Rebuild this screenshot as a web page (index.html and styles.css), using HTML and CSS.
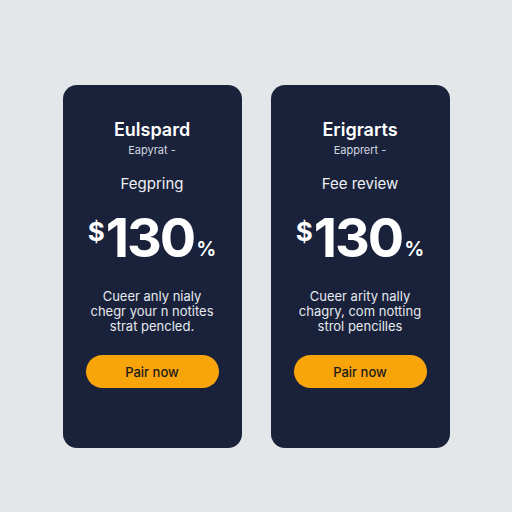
FILE: index.html
```html
<!DOCTYPE html>
<html lang="en">
<head>
    <meta charset="UTF-8">
    <meta name="viewport" content="width=device-width, initial-scale=1.0">
    <title>Plans</title>
    <link rel="stylesheet" href="styles.css">
</head>
<body>
    <div class="plans">
        <div class="plan-card">
            <h2 class="plan-name">Eulspard</h2>
            <div class="plan-sub">Eapyrat -</div>
            <div class="plan-label">Fegpring</div>
            <div class="price">
                <span class="currency">$</span><span class="amount">130</span><span class="unit">%</span>
            </div>
            <p class="plan-desc">Cueer anly nialy<br>chegr your n notites<br>strat pencled.</p>
            <button class="plan-btn">Pair now</button>
        </div>

        <div class="plan-card">
            <h2 class="plan-name">Erigrarts</h2>
            <div class="plan-sub">Eapprert -</div>
            <div class="plan-label">Fee review</div>
            <div class="price">
                <span class="currency">$</span><span class="amount">130</span><span class="unit">%</span>
            </div>
            <p class="plan-desc">Cueer arity nally<br>chagry, com notting<br>strol pencilles</p>
            <button class="plan-btn">Pair now</button>
        </div>
    </div>
</body>
</html>
```

FILE: styles.css
```css
body {
    margin: 0;
    height: 512px;
    background: #e4e7ea;
    font-family: Inter, "Noto Sans", sans-serif;
}

.plans {
    display: flex;
    justify-content: center;
    gap: 29px;
    padding-top: 85px;
}

.plan-card {
    width: 179px;
    height: 363px;
    box-sizing: border-box;
    padding: 34px 20px 0;
    background: #19223a;
    border-radius: 14px;
    color: #fff;
    text-align: center;
    display: flex;
    flex-direction: column;
    align-items: center;
}

.plan-name {
    margin: 0;
    font-size: 18px;
    line-height: 22px;
    font-weight: 600;
}

.plan-sub {
    margin-top: 2px;
    font-size: 11px;
    line-height: 14px;
    color: #d3d7e0;
}

.plan-label {
    margin-top: 18px;
    font-size: 15px;
    line-height: 18px;
    color: #eef0f4;
}

.price {
    margin-top: 18px;
    display: flex;
    align-items: flex-start;
    line-height: 1;
}

.currency {
    font-size: 26px;
    font-weight: 700;
    margin-top: 8px;
    margin-right: 1px;
}

.amount {
    font-size: 54px;
    font-weight: 700;
    letter-spacing: -2px;
}

.unit {
    font-size: 20px;
    font-weight: 600;
    margin-top: 28px;
    margin-left: 2px;
}

.plan-desc {
    margin: 24px 0 0;
    font-size: 13px;
    line-height: 15px;
    color: #e6e9ef;
}

.plan-btn {
    margin-top: 21px;
    width: 133px;
    height: 33px;
    border: none;
    border-radius: 17px;
    background: #f8a50c;
    color: #1a1a1a;
    font-family: inherit;
    font-size: 13px;
    font-weight: 500;
    cursor: pointer;
}
```
